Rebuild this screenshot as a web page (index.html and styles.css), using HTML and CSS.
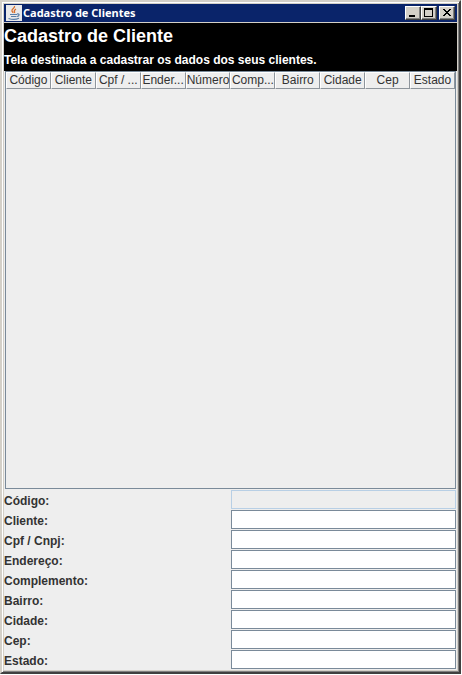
FILE: index.html
```
<!DOCTYPE html>
<html lang="pt-BR">

<head>
    <meta charset="utf-8">
    <title>Cadastro de Clientes</title>
    <link rel="stylesheet" href="styles.css">
</head>

<body>
    <div class="window">
        <div class="titlebar">
            <svg class="java-icon" viewBox="0 0 16 16" width="16" height="16">
                <rect width="16" height="16" fill="#e9e9ea" />
                <path d="M8.500 1c1 2-3.500 3-2.500 5 .3.8 1 1 .8 2M10 4C8.200 5 7.700 6 8.700 8" fill="none" stroke="#d9702c" stroke-width="1.300" />
                <path d="M4 9.500h7M5 11.500h5.500M11 9c3-.5 2.500 2 0 2.500M2.500 13.500c3 1 8 1 10.500-.2" fill="none" stroke="#5a7fa8" stroke-width="1.200" />
            </svg>
            <span class="titlebar-text">Cadastro de Clientes</span>
            <div class="titlebar-buttons">
                <button type="button" aria-label="Minimizar">
                    <svg viewBox="0 0 12 10" width="12" height="10"><path d="M2 7h6v2H2z" /></svg>
                </button>
                <button type="button" aria-label="Maximizar">
                    <svg viewBox="0 0 12 10" width="12" height="10"><path d="M1 0h9v9H1zM2 2v6h7V2z" fill-rule="evenodd" /></svg>
                </button>
                <button type="button" class="close" aria-label="Fechar">
                    <svg viewBox="0 0 12 10" width="12" height="10"><path d="M2 1h2v1h1v1h2V2h1V1h2v1H9v1H8v1H7v1h1v1h1v1h1v1H8V7H7V6H5v1H4v1H2V7h1V6h1V5h1V4H4V3H3V2H2z" /></svg>
                </button>
            </div>
        </div>
        <div class="header">
            <h1>Cadastro de Cliente</h1>
            <p>Tela destinada a cadastrar os dados dos seus clientes.</p>
        </div>
        <div class="table-pane">
            <table>
                <thead>
                    <tr>
                        <th>Código</th>
                        <th>Cliente</th>
                        <th>Cpf / ...</th>
                        <th>Ender...</th>
                        <th>Número</th>
                        <th>Comp...</th>
                        <th>Bairro</th>
                        <th>Cidade</th>
                        <th>Cep</th>
                        <th>Estado</th>
                    </tr>
                </thead>
            </table>
        </div>
        <form class="form">
            <label for="codigo">Código:</label>
            <input type="text" id="codigo" disabled>
            <label for="cliente">Cliente:</label>
            <input type="text" id="cliente">
            <label for="cpf">Cpf / Cnpj:</label>
            <input type="text" id="cpf">
            <label for="endereco">Endereço:</label>
            <input type="text" id="endereco">
            <label for="complemento">Complemento:</label>
            <input type="text" id="complemento">
            <label for="bairro">Bairro:</label>
            <input type="text" id="bairro">
            <label for="cidade">Cidade:</label>
            <input type="text" id="cidade">
            <label for="cep">Cep:</label>
            <input type="text" id="cep">
            <label for="estado">Estado:</label>
            <input type="text" id="estado">
        </form>
    </div>
</body>

</html>
```
FILE: styles.css
```
* {
    box-sizing: border-box;
    margin: 0;
    padding: 0;
}

body {
    height: 100vh;
    padding: 0 1px 1px 0;
    background: #fff;
    font-family: "Liberation Sans", Arial, sans-serif;
    font-size: 12px;
    color: #333;
}

.window {
    display: flex;
    flex-direction: column;
    height: 100%;
    padding: 2px;
    background: #eee;
    border: 2px solid;
    border-color: #d4d0c8 #404040 #404040 #d4d0c8;
    box-shadow: inset 1px 1px #fff, inset -1px -1px #808080, inset 0 0 0 2px #d4d0c8;
}

.titlebar {
    display: flex;
    align-items: center;
    height: 19px;
    padding: 0 2px;
    background: #0a246a;
    border-bottom: 1px solid #d4d0c8;
}

.java-icon {
    margin-right: 1px;
}

.titlebar-text {
    flex: 1;
    font-family: "Noto Sans", Tahoma, sans-serif;
    font-size: 11px;
    font-weight: bold;
    line-height: 18px;
    color: #fff;
}

.titlebar-buttons {
    display: flex;
}

.titlebar-buttons button {
    width: 16px;
    height: 14px;
    background: #d4d0c8;
    border: 1px solid;
    border-color: #fff #404040 #404040 #fff;
    box-shadow: inset -1px -1px #808080;
}

.titlebar-buttons .close {
    margin-left: 2px;
}

.titlebar-buttons svg {
    display: block;
    margin: 1px;
}

.header {
    height: 48px;
    background: #000;
    color: #fff;
}

.header h1 {
    font-size: 18px;
    line-height: 26px;
}

.header p {
    font-weight: bold;
    line-height: 22px;
}

.table-pane {
    flex: 1;
    margin: 0 1px;
    border: 1px solid #7a8a99;
}

table {
    width: 100%;
    table-layout: fixed;
    border-collapse: separate;
    border-spacing: 0;
}

th {
    height: 17px;
    border: 1px solid;
    border-color: #fff #8e959c #8e959c #fff;
    font-weight: normal;
    line-height: 15px;
    white-space: nowrap;
}

.form {
    display: grid;
    grid-template-columns: 1fr 1fr;
    grid-auto-rows: 19px;
    column-gap: 1px;
    row-gap: 1px;
    padding: 1px 1px 1px 0;
}

.form label {
    font-weight: bold;
    line-height: 22px;
}

.form input {
    width: 100%;
    height: 19px;
    background: #fff;
    border: 1px solid #7a8a99;
    font: inherit;
}

.form input:disabled {
    background: #eee;
    border-color: #b8cfe5;
}
```
